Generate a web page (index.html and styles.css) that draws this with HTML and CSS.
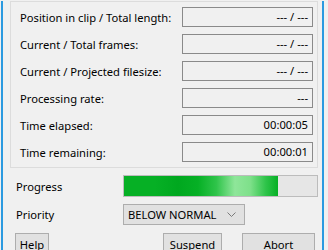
FILE: index.html
```html
<!DOCTYPE html>
<html>
<head>
<meta charset="utf-8">
<link rel="stylesheet" href="styles.css">
</head>
<body>
<div class="dialog">
  <div class="group">
    <div class="row"><span class="label">Position in clip / Total length:</span><span class="field">--- / ---</span></div>
    <div class="row"><span class="label">Current / Total frames:</span><span class="field">--- / ---</span></div>
    <div class="row"><span class="label">Current / Projected filesize:</span><span class="field">--- / ---</span></div>
    <div class="row"><span class="label">Processing rate:</span><span class="field">---</span></div>
    <div class="row"><span class="label">Time elapsed:</span><span class="field">00:00:05</span></div>
    <div class="row"><span class="label">Time remaining:</span><span class="field">00:00:01</span></div>
  </div>
  <div class="line prog-line">
    <span class="label2">Progress</span>
    <div class="progress"><div class="fill" style="width:80%"></div></div>
  </div>
  <div class="line prio-line">
    <span class="label2">Priority</span>
    <div class="select"><span>BELOW NORMAL</span>
      <svg class="chev" width="9" height="6" viewBox="0 0 9 6"><polyline points="0.5,0.5 4.5,4.5 8.5,0.5" fill="none" stroke="#7a7a7a" stroke-width="1"/></svg>
    </div>
  </div>
  <div class="buttons">
    <button class="btn help">Help</button>
    <div class="spacer"></div>
    <button class="btn suspend">Suspend</button>
    <button class="btn abort">Abort</button>
  </div>
</div>
</body>
</html>
```
FILE: styles.css
```css
html, body {
  margin: 0;
  padding: 0;
  background: #f0f0f0;
  width: 328px;
  height: 250px;
  overflow: hidden;
}
body {
  font-family: "Noto Sans", "Open Sans", sans-serif;
  font-size: 11.2px;
  color: #000;
}
.dialog {
  margin-left: 1px;
  width: 319px;
  height: 250px;
  border-left: 2px solid #2b9ae0;
  border-right: 2px solid #2b9ae0;
  background: #f0f0f0;
  box-sizing: content-box;
}
.group {
  margin-left: 7px;
  margin-top: 1px;
  width: 308px;
  border: 1px solid #dcdcdc;
  padding: 5px 4px 5px 9px;
  box-sizing: border-box;
  display: flex;
  flex-direction: column;
  gap: 7px;
}
.row {
  display: flex;
  align-items: center;
  justify-content: space-between;
  height: 20px;
}
.label {
  white-space: nowrap;
}
.field {
  width: 131px;
  height: 20px;
  box-sizing: border-box;
  border: 1px solid #8a8a8a;
  background: #f0f0f0;
  text-align: right;
  padding-right: 4px;
  line-height: 18px;
  white-space: nowrap;
}
.line {
  display: flex;
  align-items: center;
  padding-left: 13px;
}
.label2 {
  width: 107px;
}
.prog-line {
  margin-top: 7px;
  height: 22px;
}
.progress {
  width: 195px;
  height: 22px;
  box-sizing: border-box;
  border: 1px solid #bcbcbc;
  background: #e6e6e6;
}
.fill {
  height: 100%;
  background: linear-gradient(to right, #06b025 0%, #06b025 20%, #00a81f 35%, #06b025 48%, #2fc44a 60%, #8fe69a 72%, #7ee08a 82%, #2fc44a 92%, #06b025 100%);
}
.prio-line {
  margin-top: 7px;
  height: 21px;
}
.select {
  width: 122px;
  height: 21px;
  box-sizing: border-box;
  border: 1px solid #adadad;
  background: #e1e1e1;
  display: flex;
  align-items: center;
  justify-content: space-between;
  padding: 0 8px 0 4px;
}
.chev {
  display: block;
}
.buttons {
  display: flex;
  margin-top: 8px;
  padding-left: 12px;
  padding-right: 7px;
}
.spacer {
  flex: 1;
}
.btn {
  font-family: "Noto Sans", "Open Sans", sans-serif;
  font-size: 11.2px;
  color: #000;
  height: 23px;
  background: #e1e1e1;
  border: 1px solid #adadad;
  border-radius: 0;
  padding: 0;
  margin: 0;
}
.help { width: 34px; }
.suspend { width: 59px; margin-right: 20px; }
.abort { width: 73px; }
```
